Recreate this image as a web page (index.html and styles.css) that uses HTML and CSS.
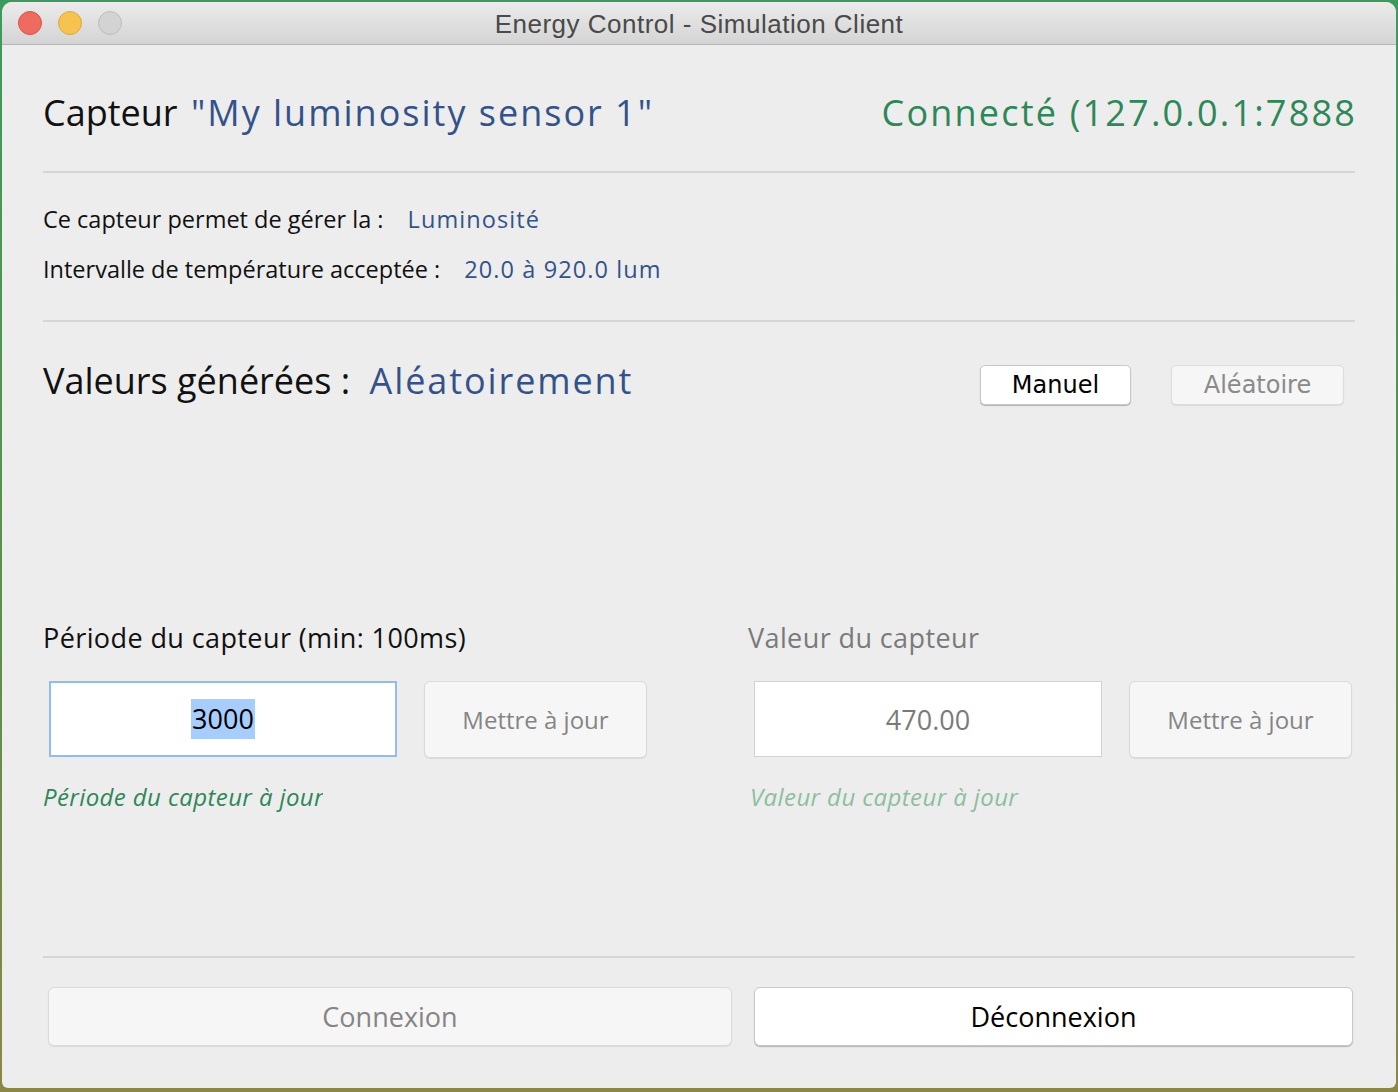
FILE: index.html
```html
<!DOCTYPE html>
<html lang="fr">
<head>
<meta charset="utf-8">
<title>Energy Control - Simulation Client</title>
<link rel="stylesheet" href="styles.css">
</head>
<body>
<div class="window">
  <div class="titlebar">
    <div class="lights">
      <span class="light red"></span>
      <span class="light yellow"></span>
      <span class="light grey"></span>
    </div>
    <div class="title">Energy Control - Simulation Client</div>
    <div></div>
  </div>
  <div class="content">
    <div class="head">
      <div class="head-left">
        <span class="h-label">Capteur</span>
        <span class="h-name">"My luminosity sensor 1"</span>
      </div>
      <div class="h-status">Connecté (127.0.0.1:7888</div>
    </div>
    <div class="sep"></div>
    <div class="info">
      <div class="info-row"><span class="info-label">Ce capteur permet de gérer la :</span><span class="info-value">Luminosité</span></div>
      <div class="info-row"><span class="info-label">Intervalle de température acceptée :</span><span class="info-value">20.0 à 920.0 lum</span></div>
    </div>
    <div class="sep"></div>
    <div class="mode">
      <div class="mode-left">
        <span class="mode-label">Valeurs générées :</span>
        <span class="mode-value">Aléatoirement</span>
      </div>
      <div class="mode-buttons">
        <button class="btn-sys active">Manuel</button>
        <button class="btn-sys disabled">Aléatoire</button>
      </div>
    </div>
    <div class="fields">
      <div class="field">
        <div class="field-label">Période du capteur (min: 100ms)</div>
        <div class="field-controls">
          <div class="input focused"><span class="selected">3000</span></div>
          <button class="btn-update">Mettre à jour</button>
        </div>
        <div class="status ok"><span class="status-clip">Période du capteur à jour</span></div>
      </div>
      <div class="field off">
        <div class="field-label">Valeur du capteur</div>
        <div class="field-controls">
          <div class="input">470.00</div>
          <button class="btn-update">Mettre à jour</button>
        </div>
        <div class="status faded">Valeur du capteur à jour</div>
      </div>
    </div>
    <div class="sep bottom-sep"></div>
    <div class="actions">
      <button class="btn-big disabled">Connexion</button>
      <button class="btn-big active">Déconnexion</button>
    </div>
  </div>
</div>
</body>
</html>
```
FILE: styles.css
```css
html, body {
  margin: 0;
  padding: 0;
}
body {
  width: 1398px;
  height: 1092px;
  box-sizing: border-box;
  padding: 2px 2px 4px 2px;
  background: linear-gradient(180deg, #3c9a5c 0%, #5f8f4a 60%, #8b8748 100%);
  font-family: "Open Sans", "Liberation Sans", sans-serif;
  overflow: hidden;
}
.window {
  width: 1394px;
  height: 1086px;
  background: #ededed;
  border-radius: 10px 10px 6px 6px;
  overflow: hidden;
  display: flex;
  flex-direction: column;
}
.titlebar {
  height: 42px;
  flex: none;
  border-bottom: 1px solid #b6b6b6;
  background: linear-gradient(180deg, #ebebeb 0%, #d4d4d4 100%);
  display: grid;
  grid-template-columns: 1fr auto 1fr;
  align-items: center;
}
.lights {
  display: flex;
  gap: 16px;
  padding-left: 16px;
}
.light {
  width: 22px;
  height: 22px;
  border-radius: 50%;
  border: 1px solid;
}
.red { background: #ee6b5f; border-color: #d5544a; }
.yellow { background: #f6c250; border-color: #dba83c; }
.grey { background: #d3d3d3; border-color: #bcbcbc; }
.title {
  font-family: "Liberation Sans", Arial, sans-serif;
  font-size: 26px;
  letter-spacing: 0.5px;
  color: #4a4a4a;
  padding-top: 3px;
}
.content {
  flex: 1;
  display: flex;
  flex-direction: column;
  padding: 0 41px;
}
.head {
  display: flex;
  justify-content: space-between;
  align-items: center;
  height: 48px;
  margin-top: 44px;
  margin-bottom: 34px;
  font-size: 36px;
  line-height: 48px;
}
.h-label { color: #111; margin-right: 4px; }
.h-name { color: #34528a; letter-spacing: 2px; }
.h-status { color: #2e8757; letter-spacing: 2.2px; margin-right: -2px; }
.sep {
  height: 2px;
  background: #d6d6d6;
  flex: none;
}
.info {
  padding-top: 21px;
  padding-bottom: 26px;
}
.info-row {
  font-size: 23.5px;
  line-height: 50px;
  height: 50px;
  color: #111;
  white-space: nowrap;
}
.info-label { margin-right: 24px; }
.info-value { color: #34528a; letter-spacing: 1.1px; }
.mode {
  display: flex;
  justify-content: space-between;
  align-items: center;
  margin-top: 35px;
  height: 48px;
}
.mode-left {
  font-size: 36px;
  line-height: 48px;
}
.mode-label { color: #111; margin-right: 10px; }
.mode-value { color: #34528a; letter-spacing: 1.9px; }
.mode-buttons {
  display: flex;
  gap: 40px;
  padding-right: 11px;
  padding-top: 7px;
}
.btn-sys {
  font-family: "DejaVu Sans", "Liberation Sans", sans-serif;
  font-size: 24px;
  height: 40px;
  padding: 0;
  border-radius: 5px;
  border: 1px solid #c8c8c8;
}
.btn-sys.active {
  width: 151px;
  background: #fff;
  color: #000;
  box-shadow: 0 1px 1px rgba(0,0,0,0.25);
}
.btn-sys.disabled {
  width: 173px;
  background: #f6f6f6;
  color: #8a8a8a;
  border-color: #dcdcdc;
  box-shadow: 0 1px 1px rgba(0,0,0,0.08);
}
.fields {
  display: grid;
  grid-template-columns: 705px 1fr;
  margin-top: 216px;
}
.field-label {
  font-size: 27px;
  letter-spacing: 0.4px;
  line-height: 34px;
  color: #111;
}
.field.off .field-label { color: #7a7a7a; }
.field-controls {
  display: flex;
  gap: 27px;
  margin-top: 26px;
  padding-left: 6px;
}
.input {
  width: 348px;
  height: 76px;
  box-sizing: border-box;
  background: #fff;
  border: 1px solid #d2d2d2;
  display: flex;
  align-items: center;
  justify-content: center;
  font-size: 27px;
  color: #7a7a7a;
}
.input.focused {
  border: 2px solid #93bbec;
  color: #000;
}
.selected {
  background: #a6cdfe;
  line-height: 40px;
  padding: 0 1px;
}
.btn-update {
  width: 223px;
  height: 77px;
  font-family: "Open Sans", sans-serif;
  font-size: 24px;
  color: #858585;
  background: #f6f6f6;
  border: 1px solid #dadada;
  border-radius: 6px;
  box-shadow: 0 1px 1px rgba(0,0,0,0.08);
  padding: 0;
}
.status {
  font-size: 24px;
  letter-spacing: 0.4px;
  font-style: italic;
  line-height: 32px;
  margin-top: 23px;
  white-space: nowrap;
}
.status-clip {
  display: inline-block;
  max-width: 280px;
  overflow: hidden;
  vertical-align: top;
}
.status.ok { color: #2e8757; }
.status.faded { color: #8dbea1; padding-left: 2px; }
.bottom-sep {
  margin-top: auto;
}
.actions {
  display: grid;
  grid-template-columns: 684px 599px;
  column-gap: 22px;
  padding-left: 5px;
  margin-top: 29px;
  margin-bottom: 42px;
}
.btn-big {
  height: 59px;
  font-family: "Open Sans", sans-serif;
  font-size: 27px;
  border-radius: 6px;
  padding: 0;
}
.btn-big.disabled {
  background: #f6f6f6;
  color: #858585;
  border: 1px solid #dadada;
  box-shadow: 0 1px 1px rgba(0,0,0,0.08);
}
.btn-big.active {
  background: #fff;
  color: #000;
  border: 1px solid #c8c8c8;
  box-shadow: 0 1px 1px rgba(0,0,0,0.25);
}
```
